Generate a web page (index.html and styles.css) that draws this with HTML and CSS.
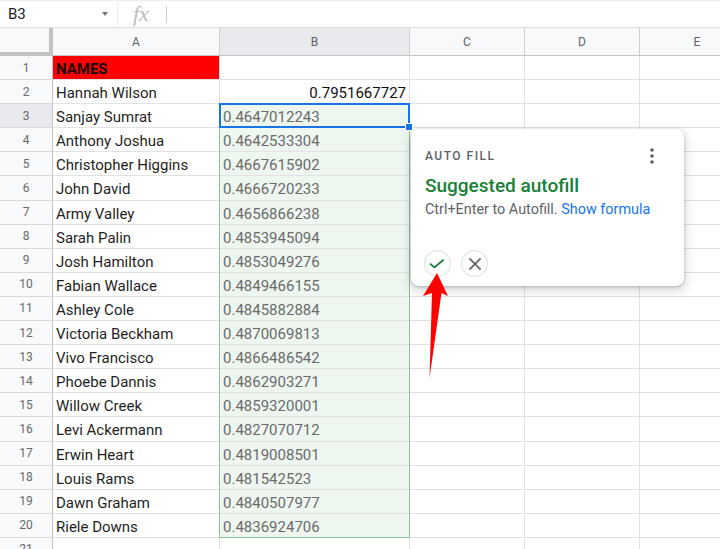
FILE: index.html
```html
<!DOCTYPE html>
<html>
<head>
<meta charset="utf-8">
<link rel="stylesheet" href="styles.css">
</head>
<body>
<div class="formula-bar">
  <div class="namebox"><span class="ref">B3</span><span class="caret"></span></div>
  <div class="sep"></div>
  <div class="fx">fx</div>
  <div class="sep2"></div>
</div>
<div class="sheet">
  <div class="corner"></div>
  <div class="ch">A</div><div class="ch on">B</div><div class="ch">C</div><div class="ch">D</div><div class="ch">E</div>

  <div class="rh">1</div><div class="c names">NAMES</div><div class="c"></div><div class="c"></div><div class="c"></div><div class="c"></div>
  <div class="rh">2</div><div class="c">Hannah Wilson</div><div class="c num">0.7951667727</div><div class="c"></div><div class="c"></div><div class="c"></div>
  <div class="rh on">3</div><div class="c">Sanjay Sumrat</div><div class="c sug">0.4647012243</div><div class="c"></div><div class="c"></div><div class="c"></div>
  <div class="rh">4</div><div class="c">Anthony Joshua</div><div class="c sug">0.4642533304</div><div class="c"></div><div class="c"></div><div class="c"></div>
  <div class="rh">5</div><div class="c">Christopher Higgins</div><div class="c sug">0.4667615902</div><div class="c"></div><div class="c"></div><div class="c"></div>
  <div class="rh">6</div><div class="c">John David</div><div class="c sug">0.4666720233</div><div class="c"></div><div class="c"></div><div class="c"></div>
  <div class="rh">7</div><div class="c">Army Valley</div><div class="c sug">0.4656866238</div><div class="c"></div><div class="c"></div><div class="c"></div>
  <div class="rh">8</div><div class="c">Sarah Palin</div><div class="c sug">0.4853945094</div><div class="c"></div><div class="c"></div><div class="c"></div>
  <div class="rh">9</div><div class="c">Josh Hamilton</div><div class="c sug">0.4853049276</div><div class="c"></div><div class="c"></div><div class="c"></div>
  <div class="rh">10</div><div class="c">Fabian Wallace</div><div class="c sug">0.4849466155</div><div class="c"></div><div class="c"></div><div class="c"></div>
  <div class="rh">11</div><div class="c">Ashley Cole</div><div class="c sug">0.4845882884</div><div class="c"></div><div class="c"></div><div class="c"></div>
  <div class="rh">12</div><div class="c">Victoria Beckham</div><div class="c sug">0.4870069813</div><div class="c"></div><div class="c"></div><div class="c"></div>
  <div class="rh">13</div><div class="c">Vivo Francisco</div><div class="c sug">0.4866486542</div><div class="c"></div><div class="c"></div><div class="c"></div>
  <div class="rh">14</div><div class="c">Phoebe Dannis</div><div class="c sug">0.4862903271</div><div class="c"></div><div class="c"></div><div class="c"></div>
  <div class="rh">15</div><div class="c">Willow Creek</div><div class="c sug">0.4859320001</div><div class="c"></div><div class="c"></div><div class="c"></div>
  <div class="rh">16</div><div class="c">Levi Ackermann</div><div class="c sug">0.4827070712</div><div class="c"></div><div class="c"></div><div class="c"></div>
  <div class="rh">17</div><div class="c">Erwin Heart</div><div class="c sug">0.4819008501</div><div class="c"></div><div class="c"></div><div class="c"></div>
  <div class="rh">18</div><div class="c">Louis Rams</div><div class="c sug">0.481542523</div><div class="c"></div><div class="c"></div><div class="c"></div>
  <div class="rh">19</div><div class="c">Dawn Graham</div><div class="c sug">0.4840507977</div><div class="c"></div><div class="c"></div><div class="c"></div>
  <div class="rh">20</div><div class="c">Riele Downs</div><div class="c sug">0.4836924706</div><div class="c"></div><div class="c"></div><div class="c"></div>
  <div class="rh">21</div><div class="c"></div><div class="c"></div><div class="c"></div><div class="c"></div><div class="c"></div>

  <div class="range"></div>
  <div class="active"><span class="handle"></span></div>
</div>

<div class="popup">
  <div class="pop-head">
    <span class="pop-label">AUTO FILL</span>
    <svg class="kebab" width="6" height="18" viewBox="0 0 6 18"><circle cx="3" cy="3" r="1.8"/><circle cx="3" cy="9" r="1.8"/><circle cx="3" cy="15" r="1.8"/></svg>
  </div>
  <div class="pop-title">Suggested autofill</div>
  <div class="pop-text">Ctrl+Enter to Autofill. <span class="link">Show formula</span></div>
  <div class="pop-actions">
    <span class="btn ok"><svg width="18" height="18" viewBox="0 0 18 18"><path d="M1 8.6 L5.4 12.4 L14.6 4.8" fill="none" stroke="#188038" stroke-width="1.8"/></svg></span>
    <span class="btn no"><svg width="16" height="16" viewBox="0 0 16 16"><path d="M2.4 2.4 L13.6 13.6 M13.6 2.4 L2.4 13.6" fill="none" stroke="#5f6368" stroke-width="1.7"/></svg></span>
  </div>
</div>

<svg class="arrow" width="32" height="112" viewBox="0 0 32 112"><polygon points="17,3 28,26 21.5,23 9.5,108 12,23 3,26" fill="#ff0000"/></svg>
</body>
</html>
```

FILE: styles.css
```css
html, body {
  margin: 0;
  padding: 0;
  width: 720px;
  height: 549px;
  overflow: hidden;
  background: #ffffff;
  font-family: Roboto, "Liberation Sans", sans-serif;
}

.formula-bar {
  height: 28px;
  border-top: 1px solid #eeeeee;
  border-bottom: 1px solid #dadce0;
  box-sizing: border-box;
  display: flex;
  align-items: center;
}

.namebox {
  width: 117px;
  display: flex;
  align-items: center;
  justify-content: space-between;
  padding: 0 9px 0 8px;
  box-sizing: border-box;
}

.ref {
  font-size: 15px;
  color: #202124;
}

.caret {
  width: 0;
  height: 0;
  border-left: 3px solid transparent;
  border-right: 3px solid transparent;
  border-top: 4px solid #777777;
}

.sep {
  width: 1px;
  height: 22px;
  background: #ececec;
}

.fx {
  width: 48px;
  padding-left: 15px;
  box-sizing: border-box;
  font-family: "Liberation Serif", serif;
  font-style: italic;
  font-size: 22px;
  color: #bdbdbd;
  line-height: 26px;
}

.sep2 {
  width: 1px;
  height: 17px;
  background: #d0d0d0;
}

.sheet {
  position: relative;
  display: grid;
  grid-template-columns: 53px 167px 190px 115px 115px 115px;
  grid-template-rows: 28px repeat(21, 24.1px);
}

.corner {
  background: #f8f9fa;
  border-right: 4px solid #c4c4c4;
  border-bottom: 4px solid #c4c4c4;
  box-sizing: border-box;
}

.ch {
  background: #f8f9fa;
  border-right: 1px solid #d0d0d0;
  border-bottom: 1px solid #c4c4c4;
  box-sizing: border-box;
  display: flex;
  align-items: center;
  justify-content: center;
  font-size: 12px;
  color: #5f6368;
}

.ch.on {
  background: #e8eaed;
}

.rh {
  background: #f8f9fa;
  border-right: 1px solid #c4c4c4;
  border-bottom: 1px solid #dadada;
  box-sizing: border-box;
  display: flex;
  align-items: center;
  justify-content: center;
  font-size: 12px;
  color: #6a6a6a;
}

.rh.on {
  background: #e8eaed;
}

.c {
  border-right: 1px solid #e2e2e2;
  border-bottom: 1px solid #e2e2e2;
  box-sizing: border-box;
  padding: 0 3px;
  font-size: 15px;
  line-height: 26px;
  color: #1f1f1f;
  white-space: nowrap;
  overflow: hidden;
}

.names {
  background: #ff0000;
  font-weight: 700;
  color: #1a0000;
}

.num {
  text-align: right;
  color: #111111;
}

.sug {
  background: #eef6f0;
  color: #6b6b6b;
}

.range {
  position: absolute;
  grid-column: 3 / 4;
  grid-row: 4 / 22;
  top: 0;
  bottom: 0;
  left: -1px;
  right: 0;
  border: 1px solid #8fbf9c;
  pointer-events: none;
}

.active {
  position: absolute;
  grid-column: 3 / 4;
  grid-row: 4 / 5;
  top: -1px;
  left: -1px;
  right: 0;
  bottom: 0;
  border: 2px solid #1a73e8;
  pointer-events: none;
}

.handle {
  position: absolute;
  right: -5px;
  bottom: -5px;
  width: 6px;
  height: 6px;
  background: #1a73e8;
  border: 1px solid #ffffff;
}

.popup {
  position: absolute;
  left: 411px;
  top: 129px;
  width: 273px;
  height: 157px;
  box-sizing: border-box;
  background: #ffffff;
  border-radius: 8px;
  box-shadow: 0 1px 3px rgba(60, 64, 67, 0.3), 0 4px 8px 3px rgba(60, 64, 67, 0.15);
  padding: 17px 29px 0 14px;
  z-index: 5;
}

.pop-head {
  display: flex;
  justify-content: space-between;
  align-items: center;
  height: 20px;
}

.pop-label {
  font-size: 12px;
  font-weight: 500;
  letter-spacing: 1.5px;
  color: #5f6368;
}

.kebab {
  fill: #5f6368;
}

.pop-title {
  margin-top: 8px;
  font-size: 19px;
  font-weight: 500;
  line-height: 24px;
  color: #188038;
}

.pop-text {
  margin-top: 3px;
  font-size: 14.4px;
  line-height: 18px;
  color: #5f6368;
}

.link {
  color: #1a73e8;
}

.pop-actions {
  margin-top: 31px;
  display: flex;
  gap: 10px;
  margin-left: -1px;
}

.btn {
  width: 27px;
  height: 27px;
  box-sizing: border-box;
  border-radius: 50%;
  border: 1px solid #dadce0;
  display: flex;
  align-items: center;
  justify-content: center;
}

.btn.ok {
  border-color: #cfe3d5;
}

.arrow {
  position: absolute;
  left: 420px;
  top: 270px;
  z-index: 6;
}
```
